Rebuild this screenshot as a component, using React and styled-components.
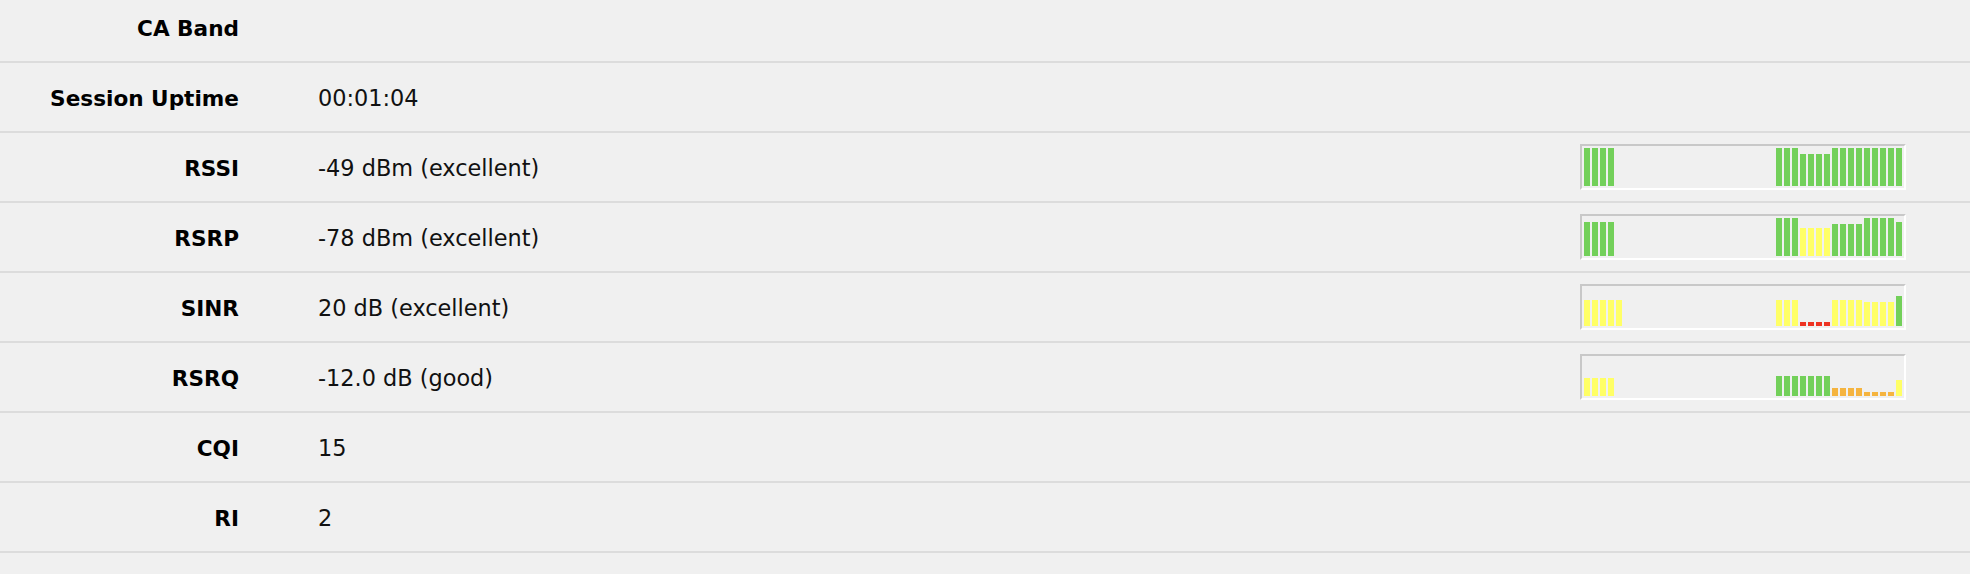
import React from 'react';
import styled, { createGlobalStyle } from 'styled-components';

const GlobalStyle = createGlobalStyle`
  html, body {
    margin: 0;
    padding: 0;
    background: #f0f0f0;
  }
  body {
    font-family: "DejaVu Sans", Verdana, sans-serif;
    color: #000;
  }
`;

const COLORS = {
  g: '#73d05a',
  y: '#ffff66',
  r: '#ee3322',
  o: '#f5b43f',
};

const Table = styled.div`
  display: flex;
  flex-direction: column;
  margin-top: -7px;
`;

const Row = styled.div`
  display: flex;
  align-items: center;
  height: 68px;
  border-bottom: 2px solid #dcdcdc;
  padding-right: 64px;
`;

const Label = styled.div`
  width: 239px;
  flex: none;
  text-align: right;
  font-weight: bold;
  font-size: 21.6px;
  padding-top: 2px;
`;

const Value = styled.div`
  flex: 1;
  padding-left: 79px;
  padding-top: 2px;
  font-size: 22.4px;
  color: #111;
`;

const Chart = styled.div`
  width: 326px;
  height: 46px;
  flex: none;
  display: flex;
  align-items: flex-end;
  padding: 0 0 2px 2px;
  box-sizing: border-box;
  border-style: solid;
  border-width: 2px;
  border-color: #c8c8c8 #fff #fff #c8c8c8;
`;

const Bar = styled.div`
  width: 6px;
  margin-right: 2px;
  flex: none;
  background: ${p => (p.$c ? COLORS[p.$c] : 'transparent')};
`;

// 40 slots: left group from slot 0, right group from slot 24
const series = (left, right) => {
  const slots = Array(40).fill(null);
  left.forEach((b, i) => { slots[i] = b; });
  right.forEach((b, i) => { slots[24 + i] = b; });
  return slots;
};

const rep = (n, h, c) => Array(n).fill([h, c]);

const rows = [
  { label: 'CA Band', value: '' },
  { label: 'Session Uptime', value: '00:01:04' },
  {
    label: 'RSSI',
    value: '-49 dBm (excellent)',
    chart: series(rep(4, 38, 'g'), [...rep(3, 38, 'g'), ...rep(4, 32, 'g'), ...rep(9, 38, 'g')]),
  },
  {
    label: 'RSRP',
    value: '-78 dBm (excellent)',
    chart: series(rep(4, 34, 'g'), [
      ...rep(3, 38, 'g'), ...rep(4, 28, 'y'), ...rep(4, 32, 'g'), ...rep(4, 38, 'g'), ...rep(1, 34, 'g'),
    ]),
  },
  {
    label: 'SINR',
    value: '20 dB (excellent)',
    chart: series(rep(5, 26, 'y'), [
      ...rep(3, 26, 'y'), ...rep(4, 4, 'r'), ...rep(4, 26, 'y'), ...rep(4, 24, 'y'), ...rep(1, 30, 'g'),
    ]),
  },
  {
    label: 'RSRQ',
    value: '-12.0 dB (good)',
    chart: series(rep(4, 18, 'y'), [
      ...rep(7, 20, 'g'), ...rep(4, 8, 'o'), ...rep(4, 4, 'o'), ...rep(1, 16, 'y'),
    ]),
  },
  { label: 'CQI', value: '15' },
  { label: 'RI', value: '2' },
];

const History = ({ data }) => (
  <Chart>
    {data.map((b, i) => (
      <Bar key={i} $c={b && b[1]} style={{ height: b ? b[0] : 0 }} />
    ))}
  </Chart>
);

export default function App() {
  return (
    <>
      <GlobalStyle />
      <Table>
        {rows.map(r => (
          <Row key={r.label}>
            <Label>{r.label}</Label>
            <Value>{r.value}</Value>
            {r.chart && <History data={r.chart} />}
          </Row>
        ))}
      </Table>
    </>
  );
}
